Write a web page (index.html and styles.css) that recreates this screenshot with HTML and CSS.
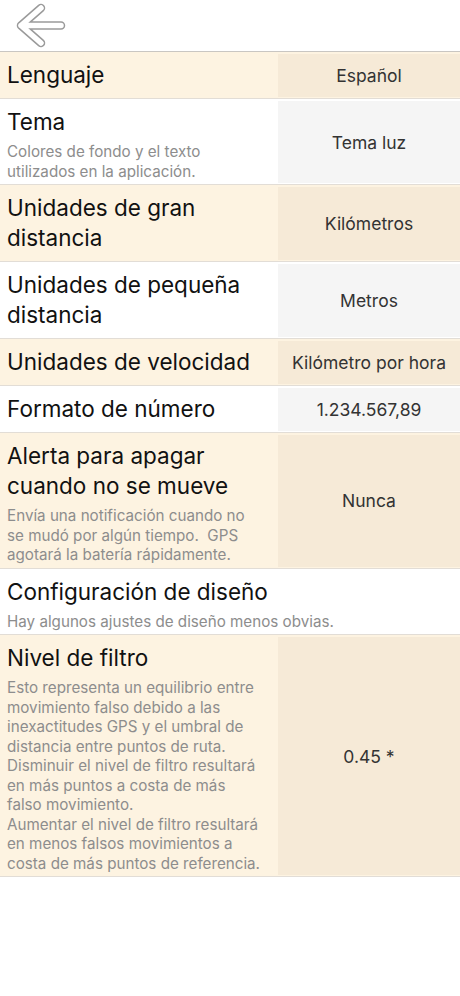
FILE: index.html
```html
<!DOCTYPE html>
<html lang="es">

<head>
    <meta charset="UTF-8">
    <meta name="viewport" content="width=device-width, initial-scale=1.0">
    <title>Ajustes</title>
    <link rel="stylesheet" href="styles.css">
</head>

<body>
    <div class="header">
        <button class="back" type="button" aria-label="Atrás">
            <svg width="56" height="51" viewBox="0 0 56 51">
                <path d="M27 8 L7 25.5 L27 43 M7 25.5 L47 25.5" fill="none" stroke="#9a9a9a" stroke-width="8.5" stroke-linecap="round" stroke-linejoin="round" />
                <path d="M27 8 L7 25.5 L27 43 M7 25.5 L47 25.5" fill="none" stroke="#ffffff" stroke-width="5.5" stroke-linecap="round" stroke-linejoin="round" />
            </svg>
        </button>
    </div>

    <div class="settings">
        <div class="row cream">
            <div class="label">
                <div class="title">Lenguaje</div>
            </div>
            <div class="value">Español</div>
        </div>
        <div class="row">
            <div class="label">
                <div class="title">Tema</div>
                <div class="desc">Colores de fondo y el texto utilizados en la aplicación.</div>
            </div>
            <div class="value">Tema luz</div>
        </div>
        <div class="row cream">
            <div class="label">
                <div class="title">Unidades de gran distancia</div>
            </div>
            <div class="value">Kilómetros</div>
        </div>
        <div class="row">
            <div class="label">
                <div class="title">Unidades de pequeña distancia</div>
            </div>
            <div class="value">Metros</div>
        </div>
        <div class="row cream">
            <div class="label">
                <div class="title">Unidades de velocidad</div>
            </div>
            <div class="value">Kilómetro por hora</div>
        </div>
        <div class="row">
            <div class="label">
                <div class="title">Formato de número</div>
            </div>
            <div class="value">1.234.567,89</div>
        </div>
        <div class="row cream">
            <div class="label">
                <div class="title">Alerta para apagar cuando no se mueve</div>
                <div class="desc">Envía una notificación cuando no se mudó por algún tiempo.&nbsp; GPS agotará la batería rápidamente.</div>
            </div>
            <div class="value">Nunca</div>
        </div>
        <div class="row">
            <div class="label wide">
                <div class="title">Configuración de diseño</div>
                <div class="desc">Hay algunos ajustes de diseño menos obvias.</div>
            </div>
        </div>
        <div class="row cream">
            <div class="label">
                <div class="title">Nivel de filtro</div>
                <div class="desc">Esto representa un equilibrio entre movimiento falso debido a las inexactitudes GPS y el umbral de distancia entre puntos de ruta.<br />
                    Disminuir el nivel de filtro resultará en más puntos a costa de más falso&nbsp;movimiento.<br />
                    Aumentar el nivel de filtro resultará en menos falsos movimientos a costa de más puntos de referencia.</div>
            </div>
            <div class="value">0.45 *</div>
        </div>
    </div>
</body>

</html>
```

FILE: styles.css
```css
body {
    margin: 0;
    background-color: #ffffff;
    font-family: Inter, "Noto Sans", sans-serif;
    color: #111111;
}

.header {
    height: 51px;
    border-bottom: 1px solid #c9c6c2;
    display: flex;
}

.back {
    background: none;
    border: none;
    padding: 0;
    margin-left: 14px;
    display: flex;
    cursor: pointer;
}

.row {
    display: flex;
    border-bottom: 1px solid #e2ddd6;
    background-color: #ffffff;
}

.row.cream {
    background-color: #fdf3e1;
}

.label {
    width: 258px;
    padding: 8px 13px 8px 7px;
    flex-shrink: 0;
}

.label.wide {
    width: auto;
    flex: 1;
}

.title {
    font-size: 22.5px;
    line-height: 30px;
    color: #111111;
}

/* la descripción va un poco más abajo, el alto de la fila no cambia */
.desc {
    margin: 5px 0 -5px;
    font-size: 15.2px;
    line-height: 19.5px;
    color: #8d8d8d;
}

.value {
    flex: 1;
    margin: 2px 0 1px;
    display: flex;
    align-items: center;
    justify-content: center;
    text-align: center;
    font-size: 17.5px;
    color: #333333;
    background-color: #f5f5f5;
}

.row.cream .value {
    background-color: #f6ead7;
}
```
